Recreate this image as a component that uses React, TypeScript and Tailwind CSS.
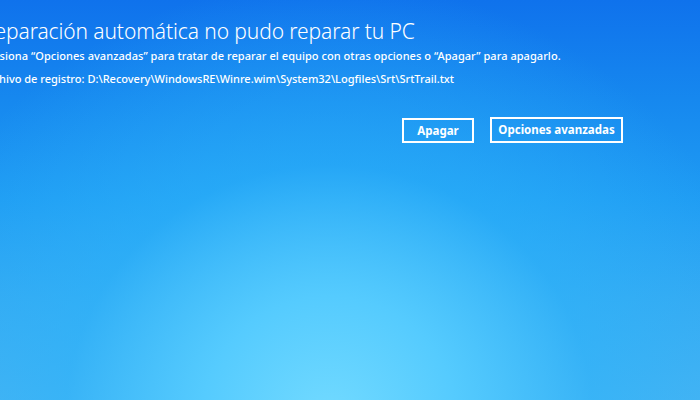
export default function App() {
  return (
    <div
      className="relative w-[700px] h-[400px] overflow-hidden text-white bg-[radial-gradient(ellipse_65%_110%_at_47%_105%,#72daff_0%,#55cbfe_28%,rgba(45,180,250,0.55)_58%,rgba(40,160,245,0)_100%),linear-gradient(180deg,#0f72ec_0%,#1688ef_25%,#1f9cf3_50%,#36aaf2_75%,#47b3f2_100%)]"
      style={{ fontFamily: '"Noto Sans", "Open Sans", sans-serif' }}
    >
      {/* status text, pushed past the left edge like the photo */}
      <div className="ml-[-18px] pt-[17px] flex flex-col">
        <h1 className="text-[21px] font-light leading-[28px] tracking-[-0.1px] whitespace-nowrap">
          Reparación automática no pudo reparar tu PC
        </h1>
        <p className="mt-[3px] text-[11px] font-medium leading-[16px] tracking-[0.05px] whitespace-nowrap">
          Presiona “Opciones avanzadas” para tratar de reparar el equipo con otras opciones o “Apagar” para apagarlo.
        </p>
        <p className="mt-[7px] text-[11px] font-medium leading-[16px] whitespace-nowrap">
          Archivo de registro: D:\Recovery\WindowsRE\Winre.wim\System32\Logfiles\Srt\SrtTrail.txt
        </p>
      </div>

      <div className="mt-[31px] flex gap-[16px] pl-[402px]">
        <button className="w-[72px] h-[25px] border-2 border-white text-[11.5px] font-bold">
          Apagar
        </button>
        <button className="w-[133px] h-[26px] border-2 border-white text-[11.5px] font-bold -mt-[1px]">
          Opciones avanzadas
        </button>
      </div>
    </div>
  );
}
